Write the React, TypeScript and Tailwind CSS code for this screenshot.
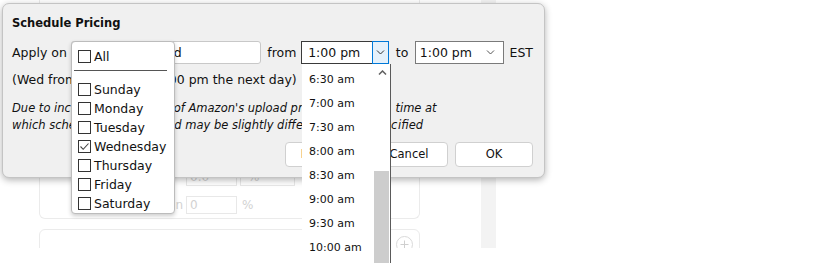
const days = ["Sunday", "Monday", "Tuesday", "Wednesday", "Thursday", "Friday", "Saturday"];
const times = ["6:30 am", "7:00 am", "7:30 am", "8:00 am", "8:30 am", "9:00 am", "9:30 am", "10:00 am", "10:30 am"];

const Chevron = ({ up = false }: { up?: boolean }) => (
  <svg width="9" height="5" viewBox="0 0 9 5">
    <path
      d={up ? "M1 4.5 L4.5 1 L8 4.5" : "M1 0.5 L4.5 4 L8 0.5"}
      fill="none"
      stroke="currentColor"
      strokeWidth={up ? 1.5 : 1}
    />
  </svg>
);

const CheckBox = ({ checked = false }: { checked?: boolean }) => (
  <span className="mb-[2px] grid h-[13px] w-[13px] shrink-0 place-items-center border border-[#333] bg-white">
    {checked && (
      <svg width="11" height="11" viewBox="0 0 11 11">
        <path d="M1.5 5.5 L4.2 8.3 L9.5 2.5" fill="none" stroke="#444" strokeWidth="1.1" />
      </svg>
    )}
  </span>
);

// faded page content behind the modal
const BackgroundPage = () => (
  <div className="flex h-[248px] w-[500px] overflow-hidden text-[12px] text-[#d2d2d2]">
    <div className="ml-[39px] flex w-[381px] flex-col">
      <div className="flex h-[219px] shrink-0 flex-col justify-end gap-[10px] rounded-b-[6px] border-x border-b border-[#ebebeb] pb-[4px]">
        <div className="flex h-[19px] items-center">
          <span className="w-[146px]" />
          <span className="flex h-full w-[51px] items-center border border-[#e8e8e8] px-[3px]">0.0</span>
          <span className="ml-[3px] flex h-full w-[55px] items-center border border-[#e8e8e8] px-[7px]">%</span>
        </div>
        <div className="flex h-[18px] items-center">
          <span className="w-[146px] pr-[3px] text-right">Margin</span>
          <span className="flex h-full w-[51px] items-center border border-[#e8e8e8] px-[3px]">0</span>
          <span className="ml-[5px]">%</span>
        </div>
      </div>
      <div className="mt-[10px] flex h-[40px] shrink-0 items-start justify-end rounded-[6px] border border-[#ebebeb] pr-[6px] pt-[6px]">
        <span className="grid h-[17px] w-[17px] place-items-center rounded-full border border-[#dadada] text-[#cfcfcf]">
          <svg width="9" height="9" viewBox="0 0 9 9">
            <path d="M4.5 0.5 V8.5 M0.5 4.5 H8.5" stroke="currentColor" strokeWidth="1" />
          </svg>
        </span>
      </div>
    </div>
    <div className="ml-[61px] h-full w-[15px] bg-[#f3f3f3]" />
  </div>
);

const ScheduleDialog = () => (
  <div className="absolute left-[2px] top-[3px] flex h-[175px] w-[543px] flex-col rounded-[7px] border border-[#c4c4c4] bg-[#f0f0f0] pl-[9px] pr-[11px] pt-[11px] text-[#111] shadow-[0_2px_7px_rgba(0,0,0,0.3)]">
    <h2 className="text-[11.5px] font-bold leading-[16px]">Schedule Pricing</h2>

    <div className="mt-[10px] flex h-[23px] items-center text-[12.5px] leading-[15px]">
      <span className="w-[59px]">Apply on</span>
      <div className="flex h-full w-[191px] items-center rounded-[3px] border border-[#c8c8c8] bg-white pl-[14px]">
        Weekly on Wed
      </div>
      <span className="ml-[6px] w-[34px]">from</span>
      <div className="flex h-full w-[88px]">
        <span className="flex flex-1 items-center border-y border-l border-[#3a3a3a] bg-white pl-[6px]">
          1:00 pm
        </span>
        <span className="grid h-full w-[17px] place-items-center border border-[#0078d7] bg-[#e5f1fb] text-[#333]">
          <Chevron />
        </span>
      </div>
      <span className="ml-[7px] w-[19px]">to</span>
      <div className="flex h-full w-[89px] items-center justify-between border border-[#7a7a7a] bg-white pl-[4px] pr-[8px]">
        <span>1:00 pm</span>
        <span className="text-[#555]">
          <Chevron />
        </span>
      </div>
      <span className="ml-[6px]">EST</span>
    </div>

    <p className="mt-[7px] h-[17px] text-[12.5px] leading-[17px]">(Wed from 1:00 pm till 1:00 pm the next day)</p>

    <div className="mt-[12px] whitespace-nowrap text-[11.5px] italic leading-[17px]">
      <p>
        Due to inconsistent timings of Amazon's upload p
        <span className="tracking-[0.85px]">rocessing, the </span>
        time at
      </p>
      <p>
        which sch<span className="tracking-[-0.15px]">eduled price is use</span>d may be slightly diffe
        <span className="tracking-[0.75px]">rent from spec</span>
        ified
      </p>
    </div>

    <div className="mt-[8px] flex justify-end gap-[7px] text-[11.5px]">
      {["Remove", "Cancel", "OK"].map((label) => (
        <button
          key={label}
          type="button"
          className="h-[25px] w-[78px] rounded-[4px] border border-[#d0d0d0] bg-white"
        >
          {label}
        </button>
      ))}
    </div>
  </div>
);

const DaysMenu = () => (
  <div className="absolute left-[71px] top-[41px] h-[173px] w-[104px] rounded-[4px] border border-[#bcbcbc] bg-white pt-[6px] text-[12.5px] text-[#111] shadow-[0_2px_4px_rgba(0,0,0,0.2)]">
    <label className="flex h-[19px] items-center gap-[3px] pl-[6px]">
      <CheckBox />
      All
    </label>
    <div className="ml-[2px] mr-[7px] mt-[3px] h-px bg-[#555]" />
    <div className="mt-[10px]">
      {days.map((day) => (
        <label key={day} className="flex h-[19px] items-center gap-[3px] pl-[6px]">
          <CheckBox checked={day === "Wednesday"} />
          {day}
        </label>
      ))}
    </div>
  </div>
);

const TimeList = () => (
  <div className="absolute left-[302px] top-[64px] h-[200px] w-[89px] border-r border-[#5a5a5a] bg-white pt-[4px] text-[11px] text-[#111]">
    {times.map((t) => (
      <div key={t} className="h-[24px] pl-[7px] leading-[24px]">
        {t}
      </div>
    ))}
    <div className="absolute bottom-0 right-0 top-0 w-[16px]">
      <div className="mt-[6px] flex justify-center text-[#606060]">
        <Chevron up />
      </div>
      <div className="absolute left-0 top-[107px] h-[120px] w-[15px] bg-[#cdcdcd]" />
    </div>
  </div>
);

export default function App() {
  return (
    <div className="relative h-[263px] w-[823px] overflow-hidden bg-white font-['DejaVu_Sans',sans-serif]">
      <BackgroundPage />
      <ScheduleDialog />
      <DaysMenu />
      <TimeList />
    </div>
  );
}
